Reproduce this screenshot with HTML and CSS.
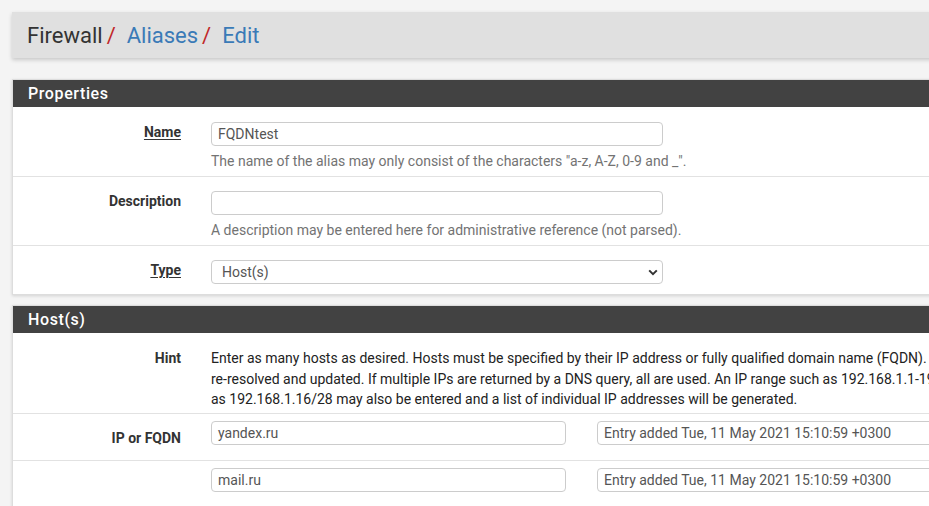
FILE: index.html
```html
<!DOCTYPE html>
<html>
<head>
<meta charset="utf-8">
<link rel="stylesheet" href="styles.css">
</head>
<body>
<div class="page">
  <div class="crumbs">
    <span class="crumb">Firewall</span><span class="sep">/</span>
    <a class="crumb link">Aliases</a><span class="sep">/</span>
    <a class="crumb link">Edit</a>
  </div>

  <div class="panel">
    <div class="panel-heading">Properties</div>
    <div class="panel-body">
      <div class="row">
        <div class="label"><u>Name</u></div>
        <div class="field">
          <div class="input wide">FQDNtest</div>
          <div class="help">The name of the alias may only consist of the characters "a-z, A-Z, 0-9 and _".</div>
        </div>
      </div>
      <div class="row">
        <div class="label">Description</div>
        <div class="field">
          <div class="input wide"></div>
          <div class="help">A description may be entered here for administrative reference (not parsed).</div>
        </div>
      </div>
      <div class="row last">
        <div class="label"><u>Type</u></div>
        <div class="field">
          <div class="input wide select"><span>Host(s)</span>
            <svg class="chev" width="10" height="7" viewBox="0 0 10 7"><path d="M1.2 1.4 L5 5.2 L8.8 1.4" fill="none" stroke="#333" stroke-width="2"/></svg>
          </div>
        </div>
      </div>
    </div>
  </div>

  <div class="panel">
    <div class="panel-heading">Host(s)</div>
    <div class="panel-body">
      <div class="row hint-row">
        <div class="label">Hint</div>
        <div class="field">
          <div class="hint">Enter as many hosts as desired. Hosts must be specified by their IP address or fully qualified domain name (FQDN). FQDN hostnames are periodically<br>re-resolved and updated. If multiple IPs are returned by a DNS query, all are used. An IP range such as 192.168.1.1-192.168.1.10 or a small subnet such<br>as 192.168.1.16/28 may also be entered and a list of individual IP addresses will be generated.</div>
        </div>
      </div>
      <div class="row entry">
        <div class="label low">IP or FQDN</div>
        <div class="field pair">
          <div class="input addr">yandex.ru</div>
          <div class="input note">Entry added Tue, 11 May 2021 15:10:59 +0300</div>
        </div>
      </div>
      <div class="row entry">
        <div class="label low"></div>
        <div class="field pair">
          <div class="input addr">mail.ru</div>
          <div class="input note">Entry added Tue, 11 May 2021 15:10:59 +0300</div>
        </div>
      </div>
    </div>
  </div>
</div>
</body>
</html>
```

FILE: styles.css
```css
html, body {
  margin: 0;
  padding: 0;
}
body {
  background: #f4f4f4;
  font-family: Roboto, "Liberation Sans", sans-serif;
  font-size: 14px;
  color: #333;
  overflow: hidden;
  width: 929px;
  height: 506px;
}
.page {
  padding: 12px 0 0 12px;
  width: 1150px;
}
.crumbs {
  box-sizing: border-box;
  height: 46px;
  background: #e0e0e0;
  box-shadow: 0 2px 4px rgba(0, 0, 0, 0.18);
  padding-left: 15px;
  padding-top: 1px;
  font-size: 22px;
  line-height: 45px;
  display: flex;
  align-items: baseline;
  white-space: nowrap;
}
.crumb {
  color: #333;
}
.crumb.link {
  color: #3a7ab7;
}
.sep {
  color: #c0282a;
  margin: 0 11px 0 4px;
}
.panel {
  margin-top: 21px;
  background: #fff;
  border: 1px solid #ddd;
  border-right: none;
  box-shadow: 0 1px 3px rgba(0, 0, 0, 0.14);
}
.panel + .panel {
  margin-top: 10px;
}
.panel-heading {
  background: #424242;
  color: #fff;
  height: 27px;
  line-height: 27px;
  padding-left: 15px;
  font-size: 16px;
  font-weight: 500;
  letter-spacing: 0.6px;
}
.row {
  display: flex;
  border-bottom: 1px solid #e2e2e2;
  padding: 14px 0 5px;
}
.panel-body .row:first-child {
  padding-top: 15px;
}
.panel-body .row.hint-row {
  padding-top: 15px;
  padding-bottom: 3px;
}
.row.last {
  border-bottom: none;
  padding-bottom: 10px;
}
.row.entry {
  padding: 7px 0 15px;
}
.row.entry:last-child {
  border-bottom: none;
}
.label {
  width: 168px;
  flex: none;
  text-align: right;
  font-weight: 700;
  line-height: 20px;
  color: #333;
}
.label u {
  text-decoration-thickness: 1px;
  text-underline-offset: 2px;
}
.label.low {
  box-sizing: border-box;
  height: 24px;
  padding-top: 7px;
}
.field {
  margin-left: 30px;
  flex: 1;
}
.input {
  box-sizing: border-box;
  height: 24px;
  border: 1px solid #ccc;
  border-radius: 4px;
  background: #fff;
  color: #555;
  line-height: 22px;
  padding: 0 6px;
  white-space: nowrap;
  overflow: hidden;
}
.input.wide {
  width: 452px;
}
.select {
  display: flex;
  align-items: center;
  padding-left: 10px;
  padding-right: 0;
  justify-content: space-between;
}
.chev {
  margin-right: 4px;
}
.help {
  color: #737373;
  line-height: 20px;
  margin-top: 5px;
  white-space: nowrap;
}
.hint {
  color: #222;
  line-height: 20.5px;
  white-space: nowrap;
}
.pair {
  display: flex;
  gap: 31px;
}
.input.addr {
  width: 355px;
  flex: none;
}
.input.note {
  width: 420px;
  flex: none;
}
```
